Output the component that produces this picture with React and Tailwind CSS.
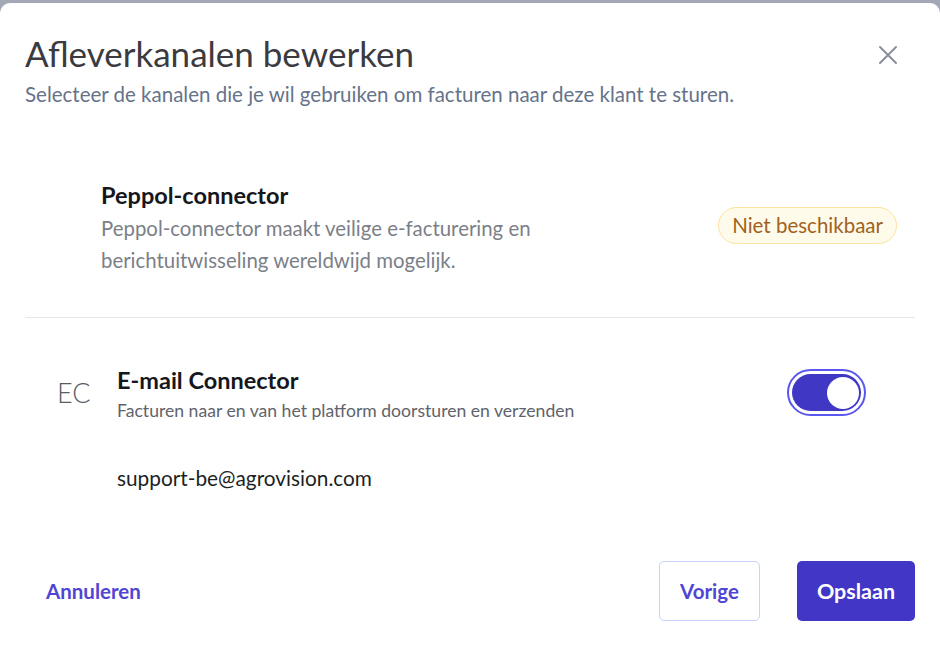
import React from "react";

export default function App() {
  return (
    <div className="h-[645px] w-[940px] bg-[#a4a8b6] pt-[3px] overflow-hidden" style={{ fontFamily: "Lato, 'Noto Sans', sans-serif" }}>
      <div className="h-[642px] bg-white rounded-t-[10px] relative">
        {/* Header */}
        <div className="flex items-start justify-between pl-[25px] pr-[42px] pt-[30px]">
          <div>
            <h1 className="text-[35px] leading-[40px] text-[#3b3b3f] font-normal">Afleverkanalen bewerken</h1>
            <p className="mt-[8px] text-[20.5px] leading-[26px] text-[#66738a]">Selecteer de kanalen die je wil gebruiken om facturen naar deze klant te sturen.</p>
          </div>
          <button className="mt-[12px] text-[#8a8f9c]">
            <svg width="20" height="20" viewBox="0 0 20 20" fill="none" stroke="currentColor" strokeWidth="2" strokeLinecap="round">
              <path d="M2 2L18 18M18 2L2 18" />
            </svg>
          </button>
        </div>

        {/* Peppol */}
        <div className="mt-[73px] flex items-center justify-between pl-[101px] pr-[43px]">
          <div>
            <h2 className="text-[23.5px] leading-[30px] font-bold text-[#15171c]">Peppol-connector</h2>
            <p className="mt-[2px] text-[20.4px] leading-[32px] text-[#7b7f88] w-[480px]">Peppol-connector maakt veilige e-facturering en berichtuitwisseling wereldwijd mogelijk.</p>
          </div>
          <span className="mb-[6px] inline-flex items-center h-[37px] px-[13px] rounded-full bg-[#fffbeb] border-[1.5px] border-[#fde2a0] text-[20.5px] text-[#a2621c]">Niet beschikbaar</span>
        </div>

        {/* Divider */}
        <div className="mx-[25px] mt-[41px] h-px bg-[#e3e6ec]" />

        {/* E-mail connector */}
        <div className="mt-[47px] flex items-start justify-between pl-[57px] pr-[74px]">
          <div className="flex items-start">
            <div className="w-[60px] pt-[12px] text-[27px] leading-[32px] text-[#595c63] font-light">EC</div>
            <div>
              <h2 className="text-[23.5px] leading-[30px] font-bold text-[#15171c]">E-mail Connector</h2>
              <p className="mt-[5px] text-[17.6px] leading-[22px] text-[#5f636b]">Facturen naar en van het platform doorsturen en verzenden</p>
              <p className="mt-[43px] text-[20.8px] leading-[26px] text-[#1d1f24]">support-be@agrovision.com</p>
            </div>
          </div>
          <div className="mt-[4px] w-[79px] h-[47px] rounded-full border-[2px] border-[#5a56f0] p-[3px]">
            <div className="h-full w-full rounded-full bg-[#4037c4] flex items-center justify-end pr-[2px]">
              <div className="h-[32px] w-[32px] rounded-full bg-white" />
            </div>
          </div>
        </div>

        {/* Footer */}
        <div className="absolute left-0 right-0 bottom-[24px] flex items-center justify-between pl-[46px] pr-[25px]">
          <button className="text-[20.5px] font-bold text-[#5145d4]">Annuleren</button>
          <div className="flex items-center gap-[37px]">
            <button className="h-[60px] w-[101px] rounded-[5px] border border-[#c8d2ff] text-[20.5px] font-bold text-[#5145d4]">Vorige</button>
            <button className="h-[60px] w-[118px] rounded-[5px] bg-[#4136c6] text-[21.5px] font-bold text-white">Opslaan</button>
          </div>
        </div>
      </div>
    </div>
  );
}
